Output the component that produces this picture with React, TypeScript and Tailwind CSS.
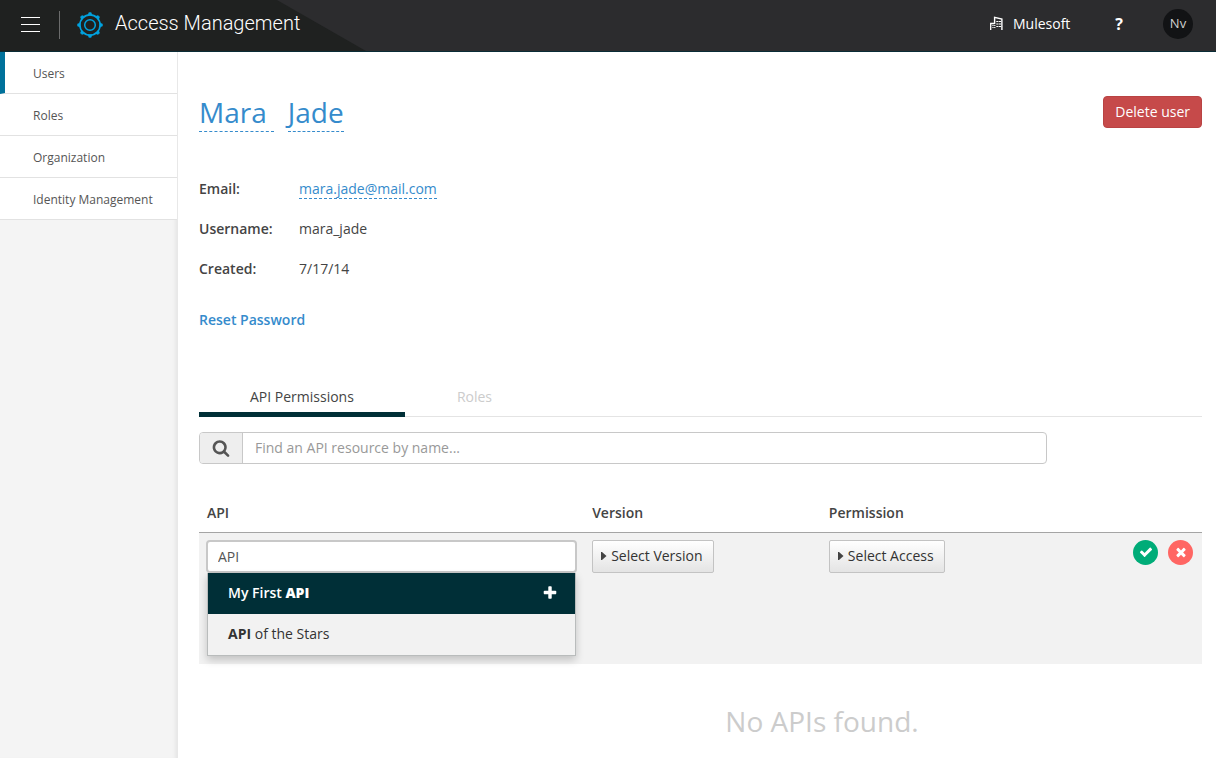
import type { ReactNode } from 'react';

const PATHS = {
  search:
    'M1216 832q0-185-131.5-316.5t-316.5-131.5-316.5 131.5-131.5 316.5 131.5 316.5 316.5 131.5 316.5-131.5 131.5-316.5zm512 832q0 52-38 90t-90 38q-54 0-90-38l-343-342q-179 124-399 124-143 0-273.5-55.5t-225-150-150-225-55.5-273.5 55.5-273.5 150-225 225-150 273.5-55.5 273.5 55.5 225 150 150 225 55.5 273.5q0 220-124 399l343 343q37 37 37 90z',
  check:
    'M1671 566q0 40-28 68l-724 724-136 136q-28 28-68 28t-68-28l-136-136-362-362q-28-28-28-68t28-68l136-136q28-28 68-28t68 28l294 295 656-657q28-28 68-28t68 28l136 136q28 28 28 68z',
  times:
    'M1490 1322q0 40-28 68l-136 136q-28 28-68 28t-68-28l-294-294-294 294q-28 28-68 28t-68-28l-136-136q-28-28-28-68t28-68l294-294-294-294q-28-28-28-68t28-68l136-136q28-28 68-28t68 28l294 294 294-294q28-28 68-28t68 28l136 136q28 28 28 68t-28 68l-294 294 294 294q28 28 28 68z',
  plus:
    'M1600 736v192q0 40-28 68t-68 28h-416v416q0 40-28 68t-68 28h-192q-40 0-68-28t-28-68v-416h-416q-40 0-68-28t-28-68v-192q0-40 28-68t68-28h416v-416q0-40 28-68t68-28h192q40 0 68 28t28 68v416h416q40 0 68 28t28 68z',
};

function Glyph({ name, className }: { name: keyof typeof PATHS; className: string }) {
  return (
    <svg viewBox="0 0 1792 1792" fill="currentColor" aria-hidden="true" className={className}>
      <path d={PATHS[name]} />
    </svg>
  );
}

const TEETH = [0, 45, 90, 135, 180, 225, 270, 315];

function GearLogo() {
  return (
    <svg viewBox="0 0 26 26" className="size-[26px]" fill="none" stroke="#00a2df" aria-hidden="true">
      <circle cx="13" cy="13" r="10.1" strokeWidth="1.6" />
      <circle cx="13" cy="13" r="5.3" strokeWidth="1.5" />
      {TEETH.map((angle) => (
        <path
          key={angle}
          d="M10.8 3.2 L11.9 0.5 H14.1 L15.2 3.2 Z"
          fill="#00a2df"
          strokeWidth="0.4"
          transform={`rotate(${angle} 13 13)`}
        />
      ))}
    </svg>
  );
}

function BuildingIcon() {
  return (
    <svg viewBox="0 0 13 15" className="h-[15px] w-[13px]" fill="none" stroke="#fff" aria-hidden="true">
      <path d="M0.7 14V7.5H4.5" strokeWidth="1.3" />
      <path d="M4.6 8V1.4L11.9 3V14" strokeWidth="1.4" />
      <path d="M6.3 5.5H11M6.3 8H11M6.3 10.5H11" strokeWidth="1.2" strokeDasharray="2.2 0.5" />
      <path d="M2.4 9.5H5.4M2.4 11.5H5.4" strokeWidth="1" strokeDasharray="1.2 0.6" />
    </svg>
  );
}

function Header() {
  return (
    <header className="relative flex h-[52px] items-center border-b border-[#0a2c36] bg-[#2c2c2e] text-white">
      <div className="absolute inset-y-0 left-0 w-[366px] bg-[#1f2120] [clip-path:polygon(0_0,277px_0,100%_100%,0_100%)]" />
      <div className="relative flex flex-1 items-center pb-[2px]">
        <button type="button" aria-label="Menu" className="ml-[21px] flex w-[19px] flex-col gap-[6px]">
          <span className="h-px bg-white" />
          <span className="h-px bg-white" />
          <span className="h-px bg-white" />
        </button>
        <span className="ml-[19px] h-7 w-px bg-[#6b6c6c]" />
        <span className="ml-[17px]">
          <GearLogo />
        </span>
        <span className="ml-3 pb-1 font-['Roboto'] text-[20px] leading-6 font-light">Access Management</span>
      </div>
      <div className="relative flex items-center pr-[23px] pb-1">
        <button type="button" className="flex items-center gap-[10px] text-sm">
          <BuildingIcon />
          Mulesoft
        </button>
        <button type="button" className="ml-[45px] text-base font-bold">
          ?
        </button>
        <button
          type="button"
          className="ml-10 flex size-[30px] items-center justify-center rounded-full bg-[#121315] text-[13px] text-[#d0d0d0]"
        >
          Nv
        </button>
      </div>
    </header>
  );
}

const NAV = ['Users', 'Roles', 'Organization', 'Identity Management'];

function Sidebar() {
  return (
    <nav className="w-[178px] shrink-0 border-r border-[#e8e8e8] bg-[#f4f4f4] shadow-[inset_-4px_0_4px_-3px_rgba(0,0,0,0.08)]">
      {NAV.map((item, i) => (
        <a
          key={item}
          href="#"
          className={`flex h-[42px] items-center border-b border-[#e2e2e2] pt-[2px] text-xs text-[#555] ${
            i === 0 ? 'border-l-[5px] border-l-[#00719b] pl-7' : 'pl-[33px]'
          } bg-white`}
        >
          {item}
        </a>
      ))}
    </nav>
  );
}

function Detail({ label, children }: { label: string; children: ReactNode }) {
  return (
    <div className="flex h-10 items-center">
      <dt className="w-[100px] font-semibold">{label}</dt>
      <dd>{children}</dd>
    </div>
  );
}

function SelectButton({ children }: { children: ReactNode }) {
  return (
    <button
      type="button"
      className="flex h-[33px] items-center gap-1 rounded-xs border border-[#c3c3c3] bg-linear-to-b from-white to-[#e4e4e4] pr-[10px] pl-2 text-[#333]"
    >
      <svg viewBox="0 0 6 8" className="h-2 w-[6px]" fill="#444" aria-hidden="true">
        <path d="M0 0 H1 L5.5 4 L1 8 H0 Z" />
      </svg>
      {children}
    </button>
  );
}

function ApiPicker() {
  return (
    <div>
      <input
        type="text"
        aria-label="API"
        defaultValue="API"
        className="block h-[33px] w-full rounded border-2 border-[#c8c8c8] bg-white px-[10px] text-[#555] outline-none"
      />
      <ul className="mx-px border border-t-0 border-[#b9bcbc] bg-[#f2f2f2] text-[#333] shadow-[0_4px_8px_rgba(0,0,0,0.2)]">
        <li>
          <button
            type="button"
            className="flex h-[41px] w-full items-center justify-between bg-[#002f37] pr-[17px] pl-5 font-semibold text-white"
          >
            <span>
              My First <b className="font-extrabold">API</b>
            </span>
            <Glyph name="plus" className="size-4" />
          </button>
        </li>
        <li>
          <button type="button" className="flex h-[41px] w-full items-center pl-5">
            <span>
              <b>API</b> of the Stars
            </span>
          </button>
        </li>
      </ul>
    </div>
  );
}

export default function App() {
  return (
    <div className="flex min-h-screen flex-col bg-white font-['Open_Sans',sans-serif] text-sm text-[#444]">
      <Header />
      <div className="flex flex-1">
        <Sidebar />
        <main className="min-w-0 flex-1 pt-[44px] pr-[14px] pl-[21px]">
          <div className="flex items-start justify-between">
            <h1 className="flex gap-[14px] text-[28px] leading-[33px] text-[#358bcc]">
              <a href="#" className="border-b border-dashed border-[#358bcc] pr-[7px] pb-[2px]">
                Mara
              </a>
              <a href="#" className="border-b border-dashed border-[#358bcc] pb-[2px]">
                Jade
              </a>
            </h1>
            <button
              type="button"
              className="h-8 rounded border border-[#b94343] bg-[#c64a4a] px-[11px] text-white"
            >
              Delete user
            </button>
          </div>

          <dl className="mt-[37px]">
            <Detail label="Email:">
              <a href="#" className="border-b border-dashed border-[#358bcc] text-[#358bcc]">
                mara.jade@mail.com
              </a>
            </Detail>
            <Detail label="Username:">mara_jade</Detail>
            <Detail label="Created:">7/17/14</Detail>
          </dl>
          <a href="#" className="mt-[21px] block w-fit font-semibold text-[#358bcc]">
            Reset Password
          </a>

          <div role="tablist" className="mt-12 flex h-[39px] items-stretch border-b border-[#e4e4e4]">
            <button
              type="button"
              role="tab"
              aria-selected="true"
              className="-mb-px border-b-[5px] border-[#002f37] px-[51px] pt-1"
            >
              API Permissions
            </button>
            <button type="button" role="tab" aria-selected="false" className="px-[52px] text-[#ccc]">
              Roles
            </button>
          </div>

          <div className="mt-[15px] flex h-8 w-[84.5%] overflow-hidden rounded border border-[#c8c8c8]">
            <label
              htmlFor="find"
              aria-label="Find an API resource"
              className="flex w-[43px] items-center justify-center border-r border-[#c8c8c8] bg-[#eee] text-[#555]"
            >
              <Glyph name="search" className="size-[18px]" />
            </label>
            <input
              id="find"
              type="text"
              placeholder="Find an API resource by name..."
              className="min-w-0 flex-1 px-3 outline-none placeholder:text-[#999]"
            />
          </div>

          <table className="mt-[31px] w-full table-fixed text-left">
            <thead>
              <tr className="h-[37px] border-b border-[#a5a5a5]">
                <th className="w-[38.4%] px-2 font-semibold">API</th>
                <th className="w-[23.6%] px-2 font-semibold">Version</th>
                <th className="w-[23.6%] px-2 font-semibold">Permission</th>
                <th aria-label="Actions" />
              </tr>
            </thead>
            <tbody>
              <tr className="bg-[#f2f2f2] align-top">
                <td className="px-[7px] pt-[7px] pb-2">
                  <ApiPicker />
                </td>
                <td className="px-2 pt-[7px]">
                  <SelectButton>Select Version</SelectButton>
                </td>
                <td className="px-2 pt-[7px]">
                  <SelectButton>Select Access</SelectButton>
                </td>
                <td className="px-[9px] pt-[7px]">
                  <div className="flex justify-end gap-[10px]">
                    <button
                      type="button"
                      aria-label="Confirm"
                      className="flex size-[25px] items-center justify-center rounded-full bg-[#00ac78] text-white"
                    >
                      <Glyph name="check" className="size-[14px]" />
                    </button>
                    <button
                      type="button"
                      aria-label="Cancel"
                      className="flex size-[25px] items-center justify-center rounded-full bg-[#ff6663] text-white"
                    >
                      <Glyph name="times" className="size-[14px]" />
                    </button>
                  </div>
                </td>
              </tr>
            </tbody>
          </table>

          <p className="mt-9 pl-[243px] text-center text-[28px] leading-[42px] text-[#ccc]">No APIs found.</p>
        </main>
      </div>
    </div>
  );
}
